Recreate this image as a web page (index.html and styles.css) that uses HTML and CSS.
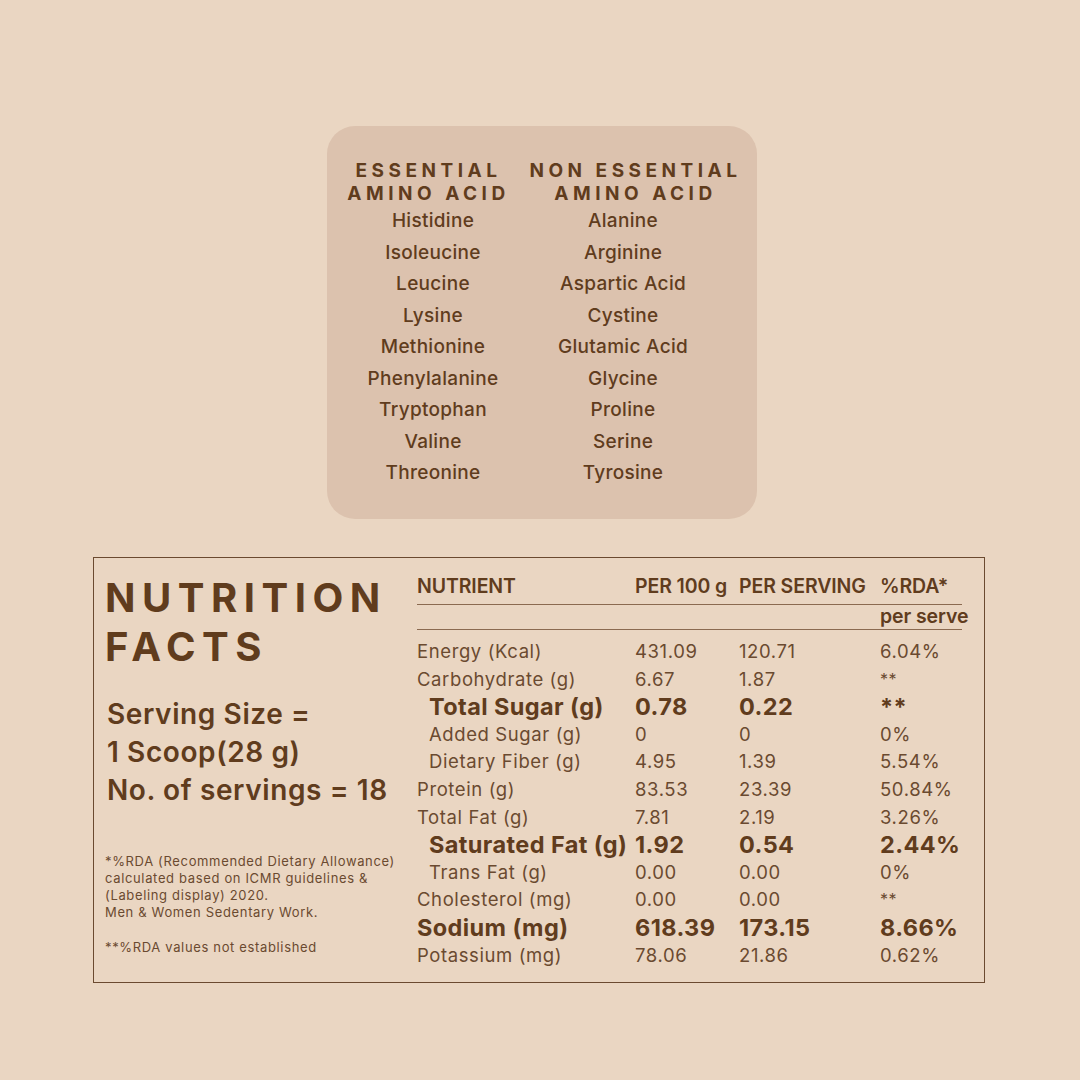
FILE: index.html
```html
<!DOCTYPE html>
<html>
<head>
<meta charset="utf-8">
<link rel="stylesheet" href="styles.css">
</head>
<body>
<div class="page">
  <section class="amino">
    <div class="amino-col amino-col-l">
      <h2 class="amino-head">ESSENTIAL<br>AMINO ACID</h2>
      <ul class="amino-list">
        <li>Histidine</li>
        <li>Isoleucine</li>
        <li>Leucine</li>
        <li>Lysine</li>
        <li>Methionine</li>
        <li>Phenylalanine</li>
        <li>Tryptophan</li>
        <li>Valine</li>
        <li>Threonine</li>
      </ul>
    </div>
    <div class="amino-col amino-col-r">
      <h2 class="amino-head">NON ESSENTIAL<br>AMINO ACID</h2>
      <ul class="amino-list">
        <li>Alanine</li>
        <li>Arginine</li>
        <li>Aspartic Acid</li>
        <li>Cystine</li>
        <li>Glutamic Acid</li>
        <li>Glycine</li>
        <li>Proline</li>
        <li>Serine</li>
        <li>Tyrosine</li>
      </ul>
    </div>
  </section>

  <section class="facts">
    <div class="facts-left">
      <h1 class="facts-title">NUTRITION<br>FACTS</h1>
      <p class="serving">Serving Size =<br>1 Scoop(28 g)<br>No. of servings = 18</p>
      <p class="note">*%RDA (Recommended Dietary Allowance)<br>calculated based on ICMR guidelines &amp;<br>(Labeling display) 2020.<br>Men &amp; Women Sedentary Work.</p>
      <p class="note note2">**%RDA values not established</p>
    </div>
    <div class="facts-table">
      <div class="thead">
        <span>NUTRIENT</span><span>PER 100 g</span><span>PER SERVING</span><span>%RDA*</span>
      </div>
      <div class="thead2"><span class="ps">per serve</span></div>
      <div class="rows">
        <div class="row"><span>Energy (Kcal)</span><span>431.09</span><span>120.71</span><span>6.04%</span></div>
        <div class="row"><span>Carbohydrate (g)</span><span>6.67</span><span>1.87</span><span class="ast">**</span></div>
        <div class="row big sub"><span>Total Sugar (g)</span><span>0.78</span><span>0.22</span><span>**</span></div>
        <div class="row sub"><span>Added Sugar (g)</span><span>0</span><span>0</span><span>0%</span></div>
        <div class="row sub"><span>Dietary Fiber (g)</span><span>4.95</span><span>1.39</span><span>5.54%</span></div>
        <div class="row"><span>Protein (g)</span><span>83.53</span><span>23.39</span><span>50.84%</span></div>
        <div class="row"><span>Total Fat (g)</span><span>7.81</span><span>2.19</span><span>3.26%</span></div>
        <div class="row big sub"><span>Saturated Fat (g)</span><span>1.92</span><span>0.54</span><span>2.44%</span></div>
        <div class="row sub"><span>Trans Fat (g)</span><span>0.00</span><span>0.00</span><span>0%</span></div>
        <div class="row"><span>Cholesterol (mg)</span><span>0.00</span><span>0.00</span><span class="ast">**</span></div>
        <div class="row big"><span>Sodium (mg)</span><span>618.39</span><span>173.15</span><span>8.66%</span></div>
        <div class="row"><span>Potassium (mg)</span><span>78.06</span><span>21.86</span><span>0.62%</span></div>
      </div>
    </div>
  </section>
</div>
</body>
</html>
```

FILE: styles.css
```css
* { box-sizing: border-box; }
html, body { margin: 0; padding: 0; }
body {
  background: #ead6c2;
  font-family: Inter, "Noto Sans", "Liberation Sans", sans-serif;
  color: #603c1d;
}
.page {
  width: 1080px;
  height: 1080px;
  padding-top: 126px;
}
.amino {
  margin-left: 327px;
  width: 430px;
  height: 393px;
  background: #dcc2ae;
  border-radius: 28px;
  display: grid;
  grid-template-columns: 180px 200px;
  padding: 33px 0 0 16px;
}
.amino-col { text-align: center; }
.amino-head {
  margin: 0;
  font-size: 19px;
  font-weight: 700;
  letter-spacing: 4.5px;
  line-height: 23px;
  white-space: nowrap;
}
.amino-col-l .amino-head { padding-right: 9px; }
.amino-col-r .amino-head { margin: 0 -20px; padding-left: 25px; }
.amino-list {
  list-style: none;
  margin: 0;
  padding: 0;
}
.amino-list li {
  font-size: 19px;
  font-weight: 500;
  line-height: 31.5px;
  letter-spacing: 0.3px;
}
.facts {
  margin: 38px 0 0 93px;
  width: 892px;
  height: 426px;
  border: 1.5px solid #6b4a30;
  display: flex;
  padding: 15px 0 0 11px;
}
.facts-left { width: 312px; }
.facts-title {
  margin: 0;
  font-size: 40px;
  font-weight: 700;
  letter-spacing: 6.5px;
  line-height: 49px;
}
.serving {
  margin: 24px 0 0 2px;
  font-size: 28px;
  font-weight: 600;
  line-height: 38px;
  letter-spacing: 0.6px;
}
.note {
  margin: 44px 0 0;
  font-size: 13px;
  line-height: 17px;
  font-weight: 400;
  letter-spacing: 0.65px;
  color: #6a4a30;
  white-space: nowrap;
}
.note2 { margin-top: 18px; }
.facts-table { width: 545px; padding-top: 2px; }
.thead, .row {
  display: grid;
  grid-template-columns: 218px 104px 141px 82px;
}
.thead {
  font-size: 19.5px;
  font-weight: 600;
  line-height: 22px;
  letter-spacing: -0.1px;
  padding-bottom: 7px;
  border-bottom: 1.8px solid #8b6a50;
  white-space: nowrap;
}
.thead2 {
  display: flex;
  justify-content: flex-end;
  border-bottom: 1.8px solid #8b6a50;
  height: 25px;
}
.ps {
  width: 82px;
  font-size: 19.5px;
  font-weight: 600;
  line-height: 22px;
  letter-spacing: -0.1px;
  white-space: nowrap;
}
.rows { padding-top: 8px; }
.row {
  font-size: 18.5px;
  line-height: 27.6px;
  font-weight: 400;
  letter-spacing: 0.6px;
  color: #6a4a30;
  white-space: nowrap;
}
.row.sub span:first-child { padding-left: 12px; }
.row.big {
  font-size: 23.5px;
  font-weight: 700;
  letter-spacing: 0.4px;
  color: #603c1d;
}
.ast { font-size: 16px; }
```
